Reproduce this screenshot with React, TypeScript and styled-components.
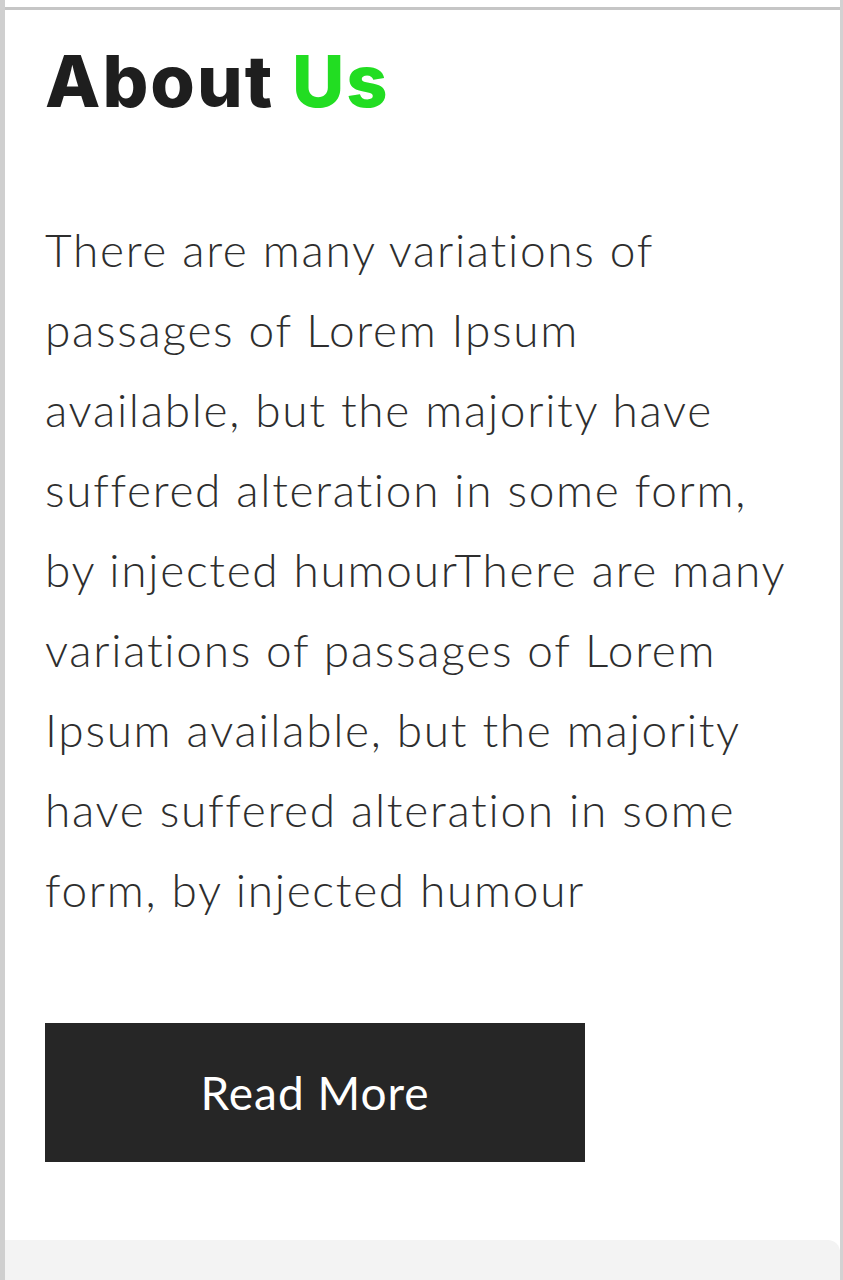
import React from 'react';
import styled, { createGlobalStyle } from 'styled-components';

const GlobalStyle = createGlobalStyle`
  html, body {
    margin: 0;
    padding: 0;
    background: #ffffff;
  }
  * {
    box-sizing: border-box;
  }
`;

const Frame = styled.div`
  min-height: 1280px;
  display: flex;
  flex-direction: column;
  background: #ffffff;
  border-left: 5px solid #cfcfcf;
  border-right: 3px solid #d2d2d2;
`;

const TopStrip = styled.div`
  height: 10px;
  border-bottom: 3px solid #c6c6c6;
`;

const Section = styled.section`
  padding: 35px 40px 0 40px;
`;

const Heading = styled.h2`
  margin: 0;
  font-family: Inter, "Liberation Sans", sans-serif;
  font-weight: 800;
  font-size: 72px;
  line-height: 1;
  letter-spacing: 2px;
  color: #1e1e1e;
`;

const Accent = styled.span`
  color: #22dd22;
`;

const Body = styled.p`
  margin: 93px 0 0 0;
  font-family: Lato, "Liberation Sans", sans-serif;
  font-weight: 300;
  font-size: 46px;
  line-height: 80px;
  letter-spacing: 1.7px;
  color: #2e2e2e;
`;

const Line = styled.span`
  display: block;
  white-space: nowrap;
`;

const ReadMore = styled.button`
  display: flex;
  align-items: center;
  justify-content: center;
  margin-top: 93px;
  width: 540px;
  height: 139px;
  border: none;
  background: #262626;
  color: #ffffff;
  font-family: Lato, "Liberation Sans", sans-serif;
  font-weight: 400;
  font-size: 46px;
  letter-spacing: 1px;
  cursor: pointer;
`;

const NextPanel = styled.div`
  margin-top: 78px;
  flex: 1;
  background: #f3f3f3;
  border-top-right-radius: 12px;
`;

const lines = [
  'There are many variations of',
  'passages of Lorem Ipsum',
  'available, but the majority have',
  'suffered alteration in some form,',
  'by injected humourThere are many',
  'variations of passages of Lorem',
  'Ipsum available, but the majority',
  'have suffered alteration in some',
  'form, by injected humour',
];

const App: React.FC = () => {
  return (
    <>
      <GlobalStyle />
      <Frame>
        <TopStrip />
        <Section>
          <Heading>
            About <Accent>Us</Accent>
          </Heading>
          <Body>
            {lines.map((text) => (
              <Line key={text}>{text}</Line>
            ))}
          </Body>
          <ReadMore>Read More</ReadMore>
        </Section>
        <NextPanel />
      </Frame>
    </>
  );
};

export default App;
